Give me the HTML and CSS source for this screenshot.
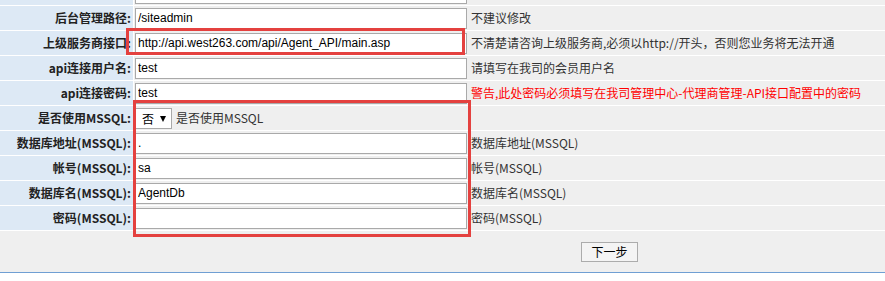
FILE: index.html
```html
<!DOCTYPE html>
<html>

<head>
    <title>代理平台安装</title>
    <link rel="stylesheet" href="styles.css">
</head>

<body>
    <div class="page">
        <table class="config-table">
            <tr>
                <td class="label"></td>
                <td class="value"><input class="text-input" type="text" value=""></td>
            </tr>
            <tr>
                <td class="label">后台管理路径:</td>
                <td class="value"><input class="text-input" type="text" value="/siteadmin"><span class="hint">不建议修改</span></td>
            </tr>
            <tr>
                <td class="label">上级服务商接口:</td>
                <td class="value"><input class="text-input" type="text" value="http://api.west263.com/api/Agent_API/main.asp"><span class="hint">不清楚请咨询上级服务商,必须以http://开头，否则您业务将无法开通</span></td>
            </tr>
            <tr>
                <td class="label">api连接用户名:</td>
                <td class="value"><input class="text-input" type="text" value="test"><span class="hint">请填写在我司的会员用户名</span></td>
            </tr>
            <tr>
                <td class="label">api连接密码:</td>
                <td class="value"><input class="text-input" type="text" value="test"><span class="hint hint-warn">警告,此处密码必须填写在我司管理中心-代理商管理-API接口配置中的密码</span></td>
            </tr>
            <tr>
                <td class="label">是否使用MSSQL:</td>
                <td class="value">
                    <span class="select-wrap"><select class="select-box">
                        <option>否</option>
                        <option>是</option>
                    </select></span><span class="hint">是否使用MSSQL</span>
                </td>
            </tr>
            <tr>
                <td class="label">数据库地址(MSSQL):</td>
                <td class="value"><input class="text-input" type="text" value="."><span class="hint">数据库地址(MSSQL)</span></td>
            </tr>
            <tr>
                <td class="label">帐号(MSSQL):</td>
                <td class="value"><input class="text-input" type="text" value="sa"><span class="hint">帐号(MSSQL)</span></td>
            </tr>
            <tr>
                <td class="label">数据库名(MSSQL):</td>
                <td class="value"><input class="text-input" type="text" value="AgentDb"><span class="hint">数据库名(MSSQL)</span></td>
            </tr>
            <tr>
                <td class="label">密码(MSSQL):</td>
                <td class="value"><input class="text-input" type="text" value=""><span class="hint">密码(MSSQL)</span></td>
            </tr>
            <tr>
                <td class="submit-cell" colspan="2"><button class="next-button" type="button">下一步</button></td>
            </tr>
        </table>

        <!-- 截图标注框 -->
        <div class="mark mark-api"></div>
        <div class="mark mark-mssql"></div>
    </div>
</body>

</html>
```

FILE: styles.css
```css
body {
    margin: 0;
    background-color: #fff;
    color: #333;
    font-family: "Noto Sans CJK SC", "Microsoft YaHei", sans-serif;
    font-size: 12px;
    overflow: hidden;
}

.page {
    position: relative;
    display: flow-root;
}

.config-table {
    width: 100%;
    border-collapse: separate;
    border-spacing: 0;
    margin-top: -19px;
}

.config-table td {
    height: 24px;
    padding: 0;
    border-bottom: 1px solid #fff;
    vertical-align: middle;
    line-height: 16px;
}

.config-table .label {
    width: 131px;
    padding-right: 2px;
    text-align: right;
    font-weight: bold;
    color: #222;
    background-color: #dde9f5;
    border-right: 1px solid #fff;
    white-space: nowrap;
}

.config-table .value {
    padding-left: 1px;
    background-color: #efefef;
    white-space: nowrap;
}

.text-input {
    width: 332px;
    height: 21px;
    box-sizing: border-box;
    margin: 0;
    padding: 0 2px;
    border: 1px solid #a9a9a9;
    background-color: #fff;
    color: #000;
    font-family: "Liberation Sans", Arial, sans-serif;
    font-size: 12px;
    vertical-align: middle;
}

.hint {
    margin-left: 4px;
    vertical-align: middle;
}

.hint-warn {
    color: #f00;
}

.select-wrap {
    position: relative;
    display: inline-block;
    vertical-align: middle;
}

/* 下拉箭头 */
.select-wrap::after {
    content: '';
    position: absolute;
    right: 6px;
    top: 8px;
    border-top: 6px solid #000;
    border-left: 3.5px solid transparent;
    border-right: 3.5px solid transparent;
    pointer-events: none;
}

.select-box {
    appearance: none;
    -webkit-appearance: none;
    display: block;
    width: 37px;
    height: 21px;
    margin: 0;
    padding: 0 0 0 6px;
    border: 1px solid #a9a9a9;
    border-radius: 0;
    background-color: #fff;
    color: #000;
    font-family: "Noto Sans CJK SC", sans-serif;
    font-size: 12px;
}

.config-table .submit-cell {
    height: 41px;
    padding-left: 581px;
    background-color: #efefef;
    border-bottom: 1px solid #6f9fd3;
}

.next-button {
    display: block;
    width: 57px;
    height: 20px;
    padding: 0;
    border: 1px solid #acacac;
    border-radius: 0;
    background-color: #f4f4f4;
    color: #000;
    font-family: "Noto Sans CJK SC", sans-serif;
    font-size: 12px;
    line-height: 18px;
    cursor: pointer;
}

.mark {
    position: absolute;
    box-sizing: border-box;
    border: 3px solid #e4413f;
    pointer-events: none;
}

.mark-api {
    left: 126px;
    top: 28px;
    width: 339px;
    height: 27px;
}

.mark-mssql {
    left: 133px;
    top: 100px;
    width: 338px;
    height: 137px;
}
```
